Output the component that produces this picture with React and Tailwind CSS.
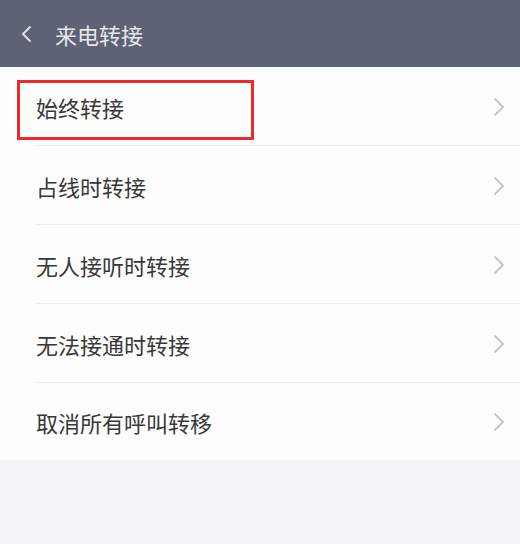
import React from 'react';

const items = ['始终转接', '占线时转接', '无人接听时转接', '无法接通时转接', '取消所有呼叫转移'];

const Chevron = ({ className }) => (
  <svg viewBox="0 0 12 20" className={className} fill="none" stroke="currentColor" strokeWidth="1.8" strokeLinecap="round" strokeLinejoin="round">
    <path d="M2 2l8 8-8 8" />
  </svg>
);

const App = () => {
  return (
    <div className="w-[520px] h-[544px] bg-[#f4f3f6] flex flex-col" style={{ fontFamily: '"Noto Sans CJK SC", "Noto Sans", sans-serif' }}>
      {/* Header */}
      <div className="h-[67px] bg-[#5e6275] flex items-center shrink-0">
        <svg viewBox="0 0 12 18" className="w-[12px] h-[18px] ml-[20px] text-[#dfe0e6]" fill="none" stroke="currentColor" strokeWidth="2" strokeLinecap="round" strokeLinejoin="round">
          <path d="M10 2L3 9l7 7" />
        </svg>
        <span className="ml-[23px] text-[22px] leading-none text-[#e6e7ec]">来电转接</span>
      </div>

      {/* List */}
      <div className="bg-[#fdfdfd]">
        {items.map((label, i) => (
          <div key={label} className={`relative flex items-center pl-[36px] ${i < items.length - 1 ? 'h-[79px]' : 'h-[77px]'}`}>
            <span className="text-[22px] leading-none text-[#383838]">{label}</span>
            <Chevron className="absolute right-[15px] top-1/2 -translate-y-1/2 w-[12px] h-[20px] text-[#c4c4c4]" />
            {i < items.length - 1 && (
              <div className="absolute left-[37px] right-0 bottom-0 h-px bg-[#ececec]" />
            )}
            {i === 0 && (
              <div className="absolute left-[17px] top-[13px] w-[237px] h-[60px] border-[3px] border-[#ee2b2b]" />
            )}
          </div>
        ))}
      </div>
    </div>
  );
};

export default App;
